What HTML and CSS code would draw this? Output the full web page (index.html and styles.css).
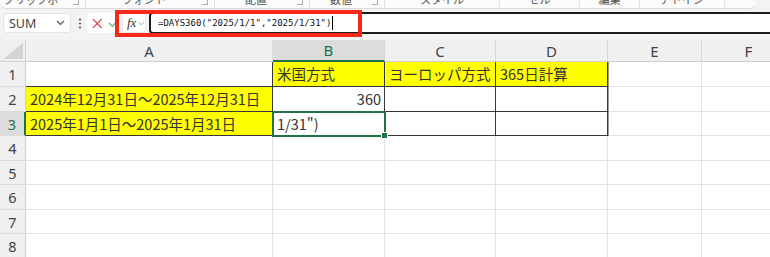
FILE: index.html
```html
<!DOCTYPE html>
<html lang="ja">
<head>
<meta charset="UTF-8">
<title>DAYS360</title>
<link rel="stylesheet" href="styles.css">
</head>
<body>

<div class="ribbon">
  <div class="grp" style="width:86px"><span>クリップボード</span><i class="launch"></i></div>
  <div class="grp" style="width:129px"><span>フォント</span><i class="launch"></i></div>
  <div class="grp" style="width:95px"><span>配置</span><i class="launch"></i></div>
  <div class="grp" style="width:75px"><span>数値</span><i class="launch"></i></div>
  <div class="grp" style="width:115px"><span>スタイル</span></div>
  <div class="grp" style="width:80px"><span>セル</span></div>
  <div class="grp" style="width:60px"><span>編集</span></div>
  <div class="grp" style="width:85px"><span>アドイン</span></div>
</div>

<div class="fbar">
  <div class="namebox">
    <span>SUM</span>
    <svg width="9" height="6" viewBox="0 0 9 6"><polyline points="1,1 4.5,4.5 8,1" fill="none" stroke="#555" stroke-width="1.2"/></svg>
  </div>
  <div class="dots">
    <svg width="4" height="11" viewBox="0 0 4 11"><circle cx="2" cy="1.5" r="1.1" fill="#555"/><circle cx="2" cy="5.5" r="1.1" fill="#555"/><circle cx="2" cy="9.5" r="1.1" fill="#555"/></svg>
  </div>
  <div class="editbtns">
    <svg width="11" height="11" viewBox="0 0 11 11"><path d="M1 1L10 10M10 1L1 10" stroke="#d6363e" stroke-width="1.2"/></svg>
    <svg width="12" height="10" viewBox="0 0 12 10"><polyline points="1,5 4.5,8.5 11,1" fill="none" stroke="#5fae6a" stroke-width="1.2"/></svg>
  </div>
  <div class="fxbox">
    <span class="fx">fx</span>
    <svg width="8" height="5" viewBox="0 0 8 5"><polyline points="1,1 4,4 7,1" fill="none" stroke="#888" stroke-width="1"/></svg>
  </div>
  <div class="finput"><span>=DAYS360("2025/1/1","2025/1/31")</span><i class="caret"></i></div>
  <div class="annot"></div>
</div>

<div class="sheet">
  <div class="corner"><i></i></div>
  <div class="hd">A</div>
  <div class="hd on">B</div>
  <div class="hd">C</div>
  <div class="hd">D</div>
  <div class="hd">E</div>
  <div class="hd">F</div>

  <div class="rh">1</div>
  <div class="c b"></div>
  <div class="c b y">米国方式</div>
  <div class="c b y">ヨーロッパ方式</div>
  <div class="c b y edge">365日計算</div>
  <div class="c"></div>
  <div class="c"></div>

  <div class="rh">2</div>
  <div class="c b y">2024年12月31日～2025年12月31日</div>
  <div class="c b num">360</div>
  <div class="c b"></div>
  <div class="c b edge"></div>
  <div class="c"></div>
  <div class="c"></div>

  <div class="rh on">3</div>
  <div class="c b y">2025年1月1日～2025年1月31日</div>
  <div class="c b sel">1/31")</div>
  <div class="c b"></div>
  <div class="c b edge"></div>
  <div class="c"></div>
  <div class="c"></div>

  <div class="rh">4</div>
  <div class="c"></div><div class="c"></div><div class="c"></div><div class="c"></div><div class="c"></div><div class="c"></div>
  <div class="rh">5</div>
  <div class="c"></div><div class="c"></div><div class="c"></div><div class="c"></div><div class="c"></div><div class="c"></div>
  <div class="rh">6</div>
  <div class="c"></div><div class="c"></div><div class="c"></div><div class="c"></div><div class="c"></div><div class="c"></div>
  <div class="rh">7</div>
  <div class="c"></div><div class="c"></div><div class="c"></div><div class="c"></div><div class="c"></div><div class="c"></div>
  <div class="rh">8</div>
  <div class="c"></div><div class="c"></div><div class="c"></div><div class="c"></div><div class="c"></div><div class="c"></div>
</div>

</body>
</html>
```

FILE: styles.css
```css
  body{
	margin: 0;
	width: 770px;
	height: 257px;
	overflow: hidden;
	background-color: #f3f3f3;
	font-family: "Noto Sans CJK JP", sans-serif;
  }

  /* ribbon (bottom edge only) */
  .ribbon{
	display: flex;
	height: 8px;
	margin-right: 14px;
	background-color: #fbfbfb;
	border-bottom: 1px solid #dadada;
	border-radius: 0 0 6px 6px;
	overflow: hidden;
  }
  .grp{
	display: flex;
	box-sizing: border-box;
	border-right: 1px solid #e2e2e2;
	font-size: 11px;
	line-height: 14px;
	color: #555;
  }
  .grp span{
	flex: 1;
	text-align: center;
	margin-top: -8px;
  }
  .launch{
	width: 5px;
	height: 4px;
	margin: 0 6px 0 0;
	border-right: 1px solid #aaa;
	border-bottom: 1px solid #aaa;
  }

  /* formula bar */
  .fbar{
	position: relative;
	display: flex;
	align-items: flex-start;
	height: 31px;
	box-sizing: border-box;
	padding: 4px 0 0 3px;
  }
  .namebox{
	display: flex;
	align-items: center;
	justify-content: space-between;
	width: 68px;
	height: 20px;
	box-sizing: border-box;
	padding: 0 5px 0 5px;
	background-color: #fff;
	border: 1px solid #e4e4e4;
	border-radius: 4px;
	font-family: "Noto Sans", sans-serif;
	font-size: 12.5px;
	color: #444;
  }
  .dots{
	width: 13px;
	height: 20px;
	display: flex;
	align-items: center;
	justify-content: center;
	margin-left: 2px;
  }
  .editbtns{
	display: flex;
	align-items: center;
	gap: 5px;
	width: 32px;
	height: 20px;
	box-sizing: border-box;
	padding-left: 5px;
	margin-left: 1px;
	background-color: #fff;
	border-radius: 4px 0 0 4px;
  }
  .fxbox{
	display: flex;
	align-items: center;
	gap: 2px;
	width: 24px;
	height: 20px;
	box-sizing: border-box;
	padding-left: 4px;
	margin-left: 3px;
	background-color: #fff;
	border: 1px solid #e6e6e6;
	border-radius: 3px;
  }
  .fx{
	font-family: "Liberation Serif", serif;
	font-style: italic;
	font-size: 13px;
	color: #333;
  }
  .finput{
	display: flex;
	align-items: center;
	flex: 1;
	height: 22px;
	margin: -1px -10px 0 3px;
	box-sizing: border-box;
	padding-left: 7px;
	background-color: #fff;
	border: 2px solid #1d1d1d;
	border-radius: 4px;
	font-family: "DejaVu Sans Mono", monospace;
	font-size: 9px;
	color: #111;
  }
  .caret{
	width: 1px;
	height: 14px;
	margin-left: 1px;
	background-color: #000;
  }
  .annot{
	position: absolute;
	left: 115px;
	top: 1px;
	width: 247px;
	height: 27px;
	box-sizing: border-box;
	border: 4px solid #f5291a;
  }

  /* sheet */
  .sheet{
	display: grid;
	grid-template-columns: 26px 247px 112px 111px 112px 94px 94px;
	grid-template-rows: 22px 25px 25px 24px 25px 24px 25px 24px 25px;
	background-color: #fff;
  }
  .corner{
	position: relative;
	background-color: #f0f0f0;
	border-right: 1px solid #d0d0d0;
	border-bottom: 1px solid #d0d0d0;
  }
  .corner i{
	position: absolute;
	right: 2px;
	bottom: 2px;
	width: 20px;
	height: 16px;
	background-color: #d4d4d4;
	clip-path: polygon(100% 0, 100% 100%, 0 100%);
  }
  .hd, .rh{
	display: flex;
	align-items: center;
	justify-content: center;
	box-sizing: border-box;
	background-color: #f0f0f0;
	font-family: "Noto Sans", sans-serif;
	font-size: 15px;
	color: #444;
  }
  .hd{
	border-right: 1px solid #d8d8d8;
	border-bottom: 1px solid #cfcfcf;
  }
  .rh{
	border-right: 1px solid #cfcfcf;
	border-bottom: 1px solid #dcdcdc;
	font-size: 14.5px;
  }
  .hd.on{
	background-color: #dcdcdc;
	color: #217346;
	border-bottom: 2px solid #217346;
  }
  .rh.on{
	background-color: #dcdcdc;
	color: #217346;
	border-right: 2px solid #217346;
  }

  .c{
	display: flex;
	align-items: center;
	box-sizing: border-box;
	padding: 0 3px 1px 4px;
	border-right: 1px solid #e2e2e2;
	border-bottom: 1px solid #e2e2e2;
	font-size: 14.5px;
	color: #333;
	white-space: nowrap;
  }
  .c.b{
	border-right: 1px solid #363636;
	border-bottom: 1px solid #363636;
  }
  .c.edge{
	box-shadow: 1px 0 0 #9a9a9a;
	position: relative;
  }
  .y{
	background-color: #ffff00;
  }
  .num{
	justify-content: flex-end;
  }
  .sel{
	position: relative;
	z-index: 2;
	outline: 2px solid #217346;
	outline-offset: -1px;
  }
  .sel::after{
	content: "";
	position: absolute;
	right: -4px;
	bottom: -4px;
	width: 5px;
	height: 5px;
	background-color: #217346;
	border: 1px solid #fff;
  }
```
